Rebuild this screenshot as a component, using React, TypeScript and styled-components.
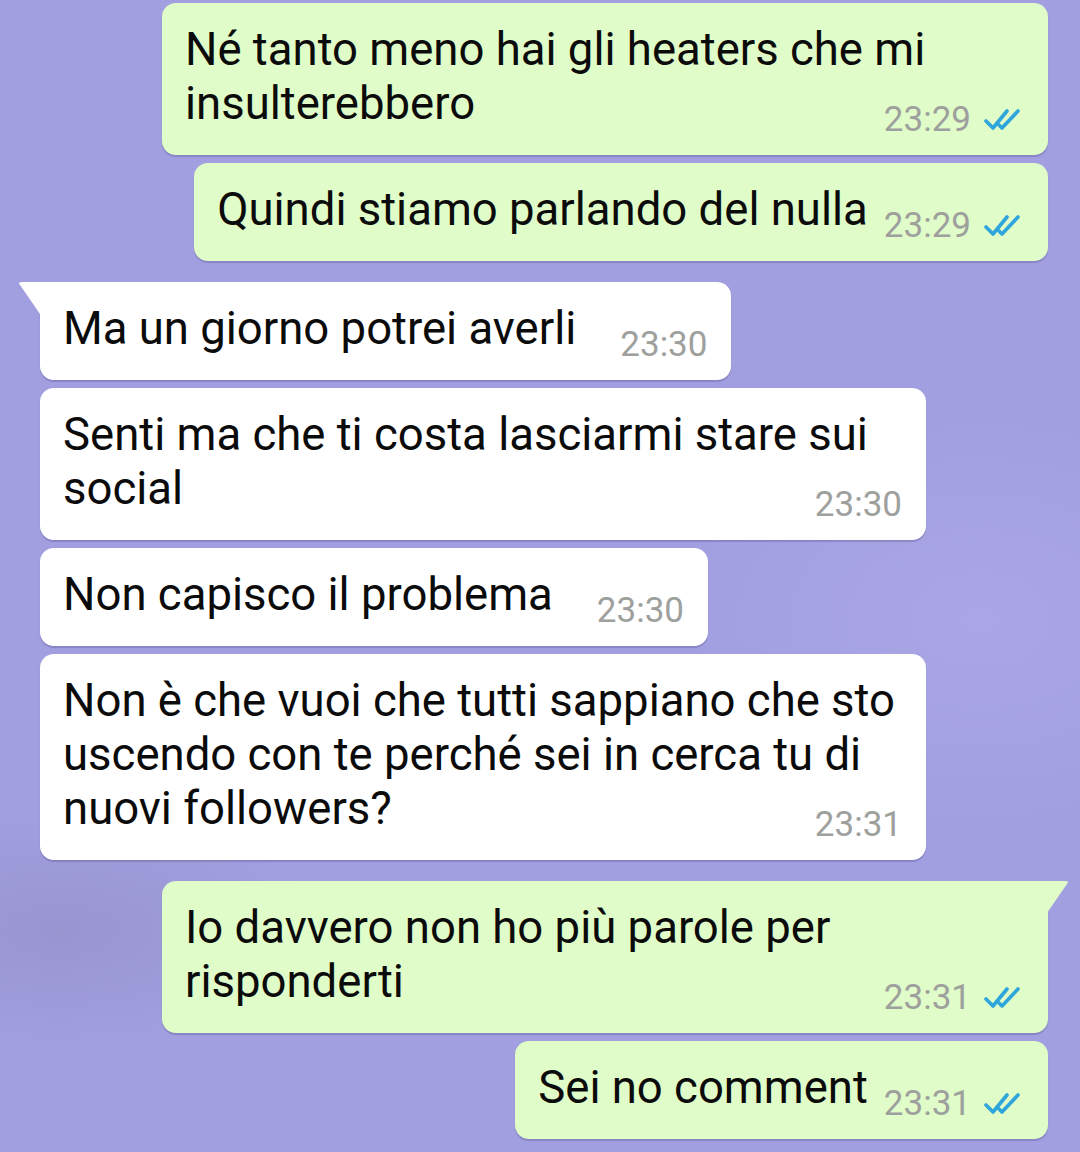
import React from "react";
import styled, { createGlobalStyle, css } from "styled-components";

const GlobalStyle = createGlobalStyle`
  html, body {
    margin: 0;
    padding: 0;
  }
  body {
    background: #a29fe0;
    font-family: Roboto, "Noto Sans", "Liberation Sans", sans-serif;
  }
`;

const Chat = styled.div`
  width: 1080px;
  height: 1152px;
  box-sizing: border-box;
  padding: 3px 32px 0 40px;
  display: flex;
  flex-direction: column;
  gap: 8px;
  overflow: hidden;
  background:
    radial-gradient(ellipse 260px 120px at 60px 930px, rgba(140, 136, 190, 0.45), transparent),
    radial-gradient(ellipse 300px 200px at 980px 620px, rgba(178, 174, 236, 0.5), transparent),
    #a29fe0;
`;

const Bubble = styled.div<{ $out?: boolean; $tail?: boolean }>`
  position: relative;
  display: flow-root;
  max-width: 886px;
  box-sizing: border-box;
  padding: 20px 24px 16px 23px;
  border-radius: 14px;
  background: ${(p) => (p.$out ? "#e0fcc8" : "#ffffff")};
  box-shadow: 0 2px 1px rgba(60, 56, 120, 0.25);
  align-self: ${(p) => (p.$out ? "flex-end" : "flex-start")};
  color: #0b0b0b;

  ${(p) =>
    p.$tail &&
    css`
      margin-top: 13px;
      ${p.$out ? "border-top-right-radius: 0;" : "border-top-left-radius: 0;"}

      &::before {
        content: "";
        position: absolute;
        top: 0;
        ${p.$out ? "right: -21px;" : "left: -22px;"}
        width: 22px;
        height: 32px;
        background: ${p.$out ? "#e0fcc8" : "#ffffff"};
        border-radius: ${p.$out ? "0 4px 0 0" : "4px 0 0 0"};
        clip-path: ${p.$out
          ? "polygon(0 0, 100% 0, 0 100%)"
          : "polygon(0 0, 100% 0, 100% 100%)"};
      }
    `}
`;

const Text = styled.span`
  font-size: 45.5px;
  line-height: 54px;
`;

const Meta = styled.span<{ $out?: boolean }>`
  float: right;
  display: flex;
  align-items: center;
  gap: 13px;
  margin: 24px 0 0 ${(p) => (p.$out ? "16px" : "44px")};
  font-size: 35px;
  line-height: 38px;
  color: #9ea09d;
`;

const Ticks = () => (
  <svg width="40" height="24" viewBox="0 0 40 24" fill="none">
    <path
      d="M2 13 L9 20 L23 3"
      stroke="#2ea6dc"
      strokeWidth="3.6"
      strokeLinecap="round"
      strokeLinejoin="round"
    />
    <path
      d="M15 17 L18 20 L34 3"
      stroke="#2ea6dc"
      strokeWidth="3.6"
      strokeLinecap="round"
      strokeLinejoin="round"
    />
  </svg>
);

type Msg = { text: string; time: string; out?: boolean; tail?: boolean };

const messages: Msg[] = [
  { text: "Né tanto meno hai gli heaters che mi insulterebbero", time: "23:29", out: true },
  { text: "Quindi stiamo parlando del nulla", time: "23:29", out: true },
  { text: "Ma un giorno potrei averli", time: "23:30", tail: true },
  { text: "Senti ma che ti costa lasciarmi stare sui social", time: "23:30" },
  { text: "Non capisco il problema", time: "23:30" },
  {
    text: "Non è che vuoi che tutti sappiano che sto uscendo con te perché sei in cerca tu di nuovi followers?",
    time: "23:31",
  },
  { text: "Io davvero non ho più parole per risponderti", time: "23:31", out: true, tail: true },
  { text: "Sei no comment", time: "23:31", out: true },
];

const App: React.FC = () => (
  <>
    <GlobalStyle />
    <Chat>
      {messages.map((m, i) => (
        <Bubble key={i} $out={m.out} $tail={m.tail}>
          <Text>{m.text}</Text>
          <Meta $out={m.out}>
            {m.time}
            {m.out && <Ticks />}
          </Meta>
        </Bubble>
      ))}
    </Chat>
  </>
);

export default App;
